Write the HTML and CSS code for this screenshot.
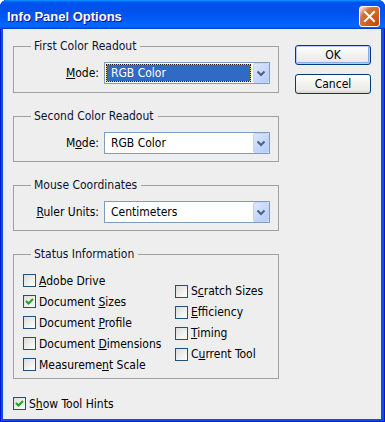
FILE: index.html
```html
<!DOCTYPE html>
<html lang="en">
<head>
  <meta charset="UTF-8" />
  <title>Info Panel Options</title>
  <link rel="stylesheet" href="styles.css">
</head>
<body>

<div class="window">
  <div class="titlebar">
    <span class="title">Info Panel Options</span>
    <span class="close">
      <svg width="21" height="21" viewBox="0 0 21 21"><path d="M6 6 L15 15 M15 6 L6 15" stroke="#fff" stroke-width="2" stroke-linecap="square"/></svg>
    </span>
  </div>

  <div class="dialog">
    <div class="main">
      <div class="groups">
        <fieldset class="group group-first">
          <legend>First Color Readout</legend>
          <div class="field">
            <label><u>M</u>ode:</label>
            <div class="combo">
              <span class="value selected">RGB Color</span>
              <span class="arrow"><svg width="16" height="20" viewBox="0 0 16 20"><path d="M4.5 8.5 L8 12 L11.5 8.5" fill="none" stroke="#4d6185" stroke-width="2"/></svg></span>
            </div>
          </div>
        </fieldset>

        <fieldset class="group">
          <legend>Second Color Readout</legend>
          <div class="field">
            <label>M<u>o</u>de:</label>
            <div class="combo">
              <span class="value">RGB Color</span>
              <span class="arrow"><svg width="16" height="20" viewBox="0 0 16 20"><path d="M4.5 8.5 L8 12 L11.5 8.5" fill="none" stroke="#4d6185" stroke-width="2"/></svg></span>
            </div>
          </div>
        </fieldset>

        <fieldset class="group">
          <legend>Mouse Coordinates</legend>
          <div class="field">
            <label><u>R</u>uler Units:</label>
            <div class="combo">
              <span class="value">Centimeters</span>
              <span class="arrow"><svg width="16" height="20" viewBox="0 0 16 20"><path d="M4.5 8.5 L8 12 L11.5 8.5" fill="none" stroke="#4d6185" stroke-width="2"/></svg></span>
            </div>
          </div>
        </fieldset>

        <fieldset class="group status">
          <legend>Status Information</legend>
          <div class="cols">
            <div class="col col-left">
              <div class="check"><span class="box"></span><span><u>A</u>dobe Drive</span></div>
              <div class="check"><span class="box checked"><svg width="11" height="11" viewBox="0 0 11 11"><path d="M2 5 L4.5 7.5 L9 3" fill="none" stroke="#21a121" stroke-width="2"/></svg></span><span>Document <u>S</u>izes</span></div>
              <div class="check"><span class="box"></span><span>Document <u>P</u>rofile</span></div>
              <div class="check"><span class="box"></span><span>Document <u>D</u>imensions</span></div>
              <div class="check"><span class="box"></span><span>Measureme<u>n</u>t Scale</span></div>
            </div>
            <div class="col">
              <div class="check"><span class="box"></span><span>S<u>c</u>ratch Sizes</span></div>
              <div class="check"><span class="box"></span><span><u>E</u>fficiency</span></div>
              <div class="check"><span class="box"></span><span><u>T</u>iming</span></div>
              <div class="check"><span class="box"></span><span>C<u>u</u>rrent Tool</span></div>
            </div>
          </div>
        </fieldset>
      </div>

      <div class="buttons">
        <button class="btn btn-default">OK</button>
        <button class="btn">Cancel</button>
      </div>
    </div>

    <div class="check hints"><span class="box checked"><svg width="11" height="11" viewBox="0 0 11 11"><path d="M2 5 L4.5 7.5 L9 3" fill="none" stroke="#21a121" stroke-width="2"/></svg></span><span>S<u>h</u>ow Tool Hints</span></div>
  </div>
</div>

</body>
</html>
```

FILE: styles.css
```css
* {
  box-sizing: border-box;
}

body {
  margin: 0;
  font-family: "DejaVu Sans Condensed", "DejaVu Sans", sans-serif;
  font-stretch: condensed;
  font-size: 12px;
  color: #000;
  background: #fff;
}

.window {
  width: 385px;
  height: 422px;
  display: flex;
  flex-direction: column;
  background: #0a4fe6;
  border-radius: 7px 7px 0 0;
  box-shadow: inset 0 0 0 1px #0019cf;
  overflow: hidden;
}

.titlebar {
  height: 29px;
  display: flex;
  align-items: center;
  justify-content: space-between;
  padding: 3px 5px 0 7px;
  background: linear-gradient(180deg, #0997ff, #0053ee 8%, #0050ee 40%, #06f 88%, #06f 93%, #005bff 95%, #003dd7 96%, #003dd7);
}

.title {
  font-family: "Liberation Sans", Arial, sans-serif;
  font-weight: bold;
  font-size: 13px;
  color: #fff;
  text-shadow: 1px 1px #0f1089;
}

.close {
  width: 21px;
  height: 21px;
  border: 1px solid #fff;
  border-radius: 3px;
  background: radial-gradient(circle at 90% 90%, #cc4600 0, #dc6527 55%, #cd7546 70%, #ffccb2 90%, #fff 100%);
  display: flex;
  align-items: center;
  justify-content: center;
}

.close svg {
  display: block;
  margin: -1px;
}

.dialog {
  flex: 1;
  margin: 0 4px 3px 3px;
  background: #eeeeee;
  padding: 9px 10px 0 10px;
}

.main {
  display: flex;
  gap: 16px;
}

.groups {
  width: 266px;
  display: flex;
  flex-direction: column;
  gap: 15px;
}

.group {
  margin: 0;
  border: 1px solid #a0a0a0;
  padding: 8px 8px 7px 9px;
  min-width: 0;
}

.group-first {
  padding-bottom: 8px;
}

.group legend {
  margin-left: 8px;
  padding: 0 4px 0 3px;
  line-height: 16px;
  color: #101030;
}

.field {
  display: flex;
  align-items: center;
}

.field label {
  width: 76px;
  margin-right: 5px;
  text-align: right;
}

.combo {
  width: 166px;
  height: 22px;
  border: 1px solid #7f9db9;
  background: #fff;
  display: flex;
}

.value {
  flex: 1;
  margin: 1px 2px 1px 1px;
  padding-left: 5px;
  line-height: 18px;
}

.value.selected {
  border: 1px dotted #1a1a1a;
  padding-left: 4px;
  line-height: 16px;
  color: #fff;
  background: linear-gradient(#316ac5, #316ac5) padding-box, linear-gradient(#f0c860, #f0c860) border-box;
}

.arrow {
  width: 16px;
  height: 20px;
  border: 1px solid #c3d3fd;
  border-radius: 2px;
  background: linear-gradient(135deg, #dce6fe, #b6cbf8);
}

.arrow svg {
  display: block;
  margin: -1px;
}

.status {
  padding: 8px 0 3px 9px;
}

.cols {
  display: flex;
  align-items: center;
}

.col-left {
  width: 152px;
}

.check {
  height: 21px;
  display: flex;
  align-items: center;
  gap: 3px;
}

.box {
  width: 13px;
  height: 13px;
  border: 1px solid #1c5180;
  background: linear-gradient(135deg, #dcdcd7, #fff);
  display: flex;
  align-items: center;
  justify-content: center;
}

.buttons {
  display: flex;
  flex-direction: column;
  gap: 9px;
  padding-top: 7px;
}

.btn {
  width: 76px;
  height: 20px;
  padding: 0;
  font: inherit;
  color: #000;
  border: 1px solid #003c74;
  border-radius: 3px;
  background: linear-gradient(180deg, #fff, #f4f4f0 40%, #ecebe6 85%, #d6d0c5);
}

.btn-default {
  box-shadow: inset 0 0 0 1px #b6cffa, inset -1px -1px 0 1px #89adf0;
}

.hints {
  margin-top: 14px;
}
```
